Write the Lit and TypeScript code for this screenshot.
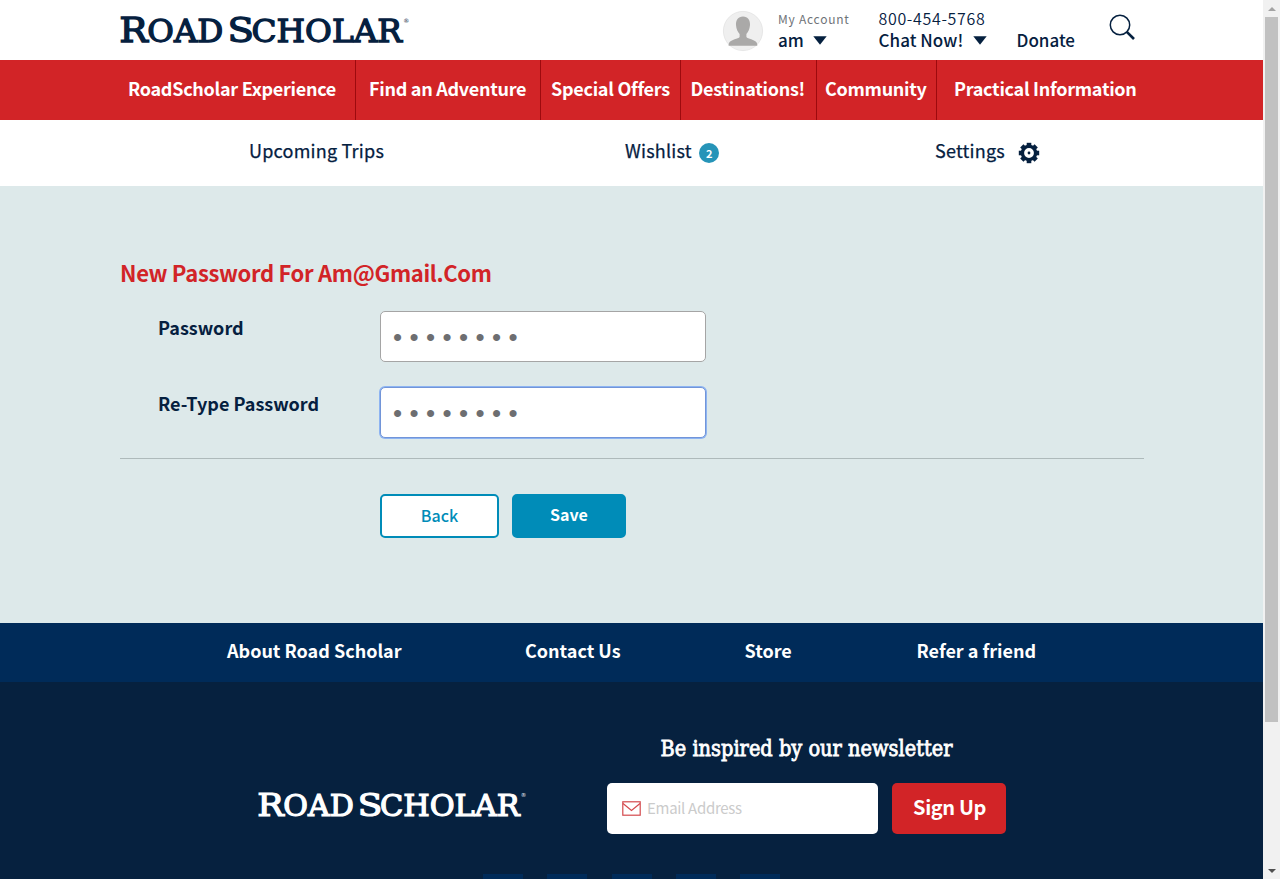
import { LitElement, html, svg, css } from 'lit';
import { customElement } from 'lit/decorators.js';

const logo = (w: number, h: number) => html`
  <svg class="logo" width=${w} height=${h} viewBox="0 -8 290 46">
    <g font-family="DejaVu Serif" font-weight="400" fill="currentColor" stroke="currentColor" stroke-width="1.3">
      <text x="-0.8" y="27.200" font-size="34" textLength="28.500" lengthAdjust="spacingAndGlyphs">R</text>
      <text x="27.3" y="27.200" font-size="31.500" textLength="76" lengthAdjust="spacingAndGlyphs">OAD</text>
      <text x="107.6" y="27.200" font-size="34" textLength="26.500" lengthAdjust="spacingAndGlyphs">S</text>
      <text x="131.5" y="27.200" font-size="31.500" textLength="150.500" lengthAdjust="spacingAndGlyphs">CHOLAR</text>
      <text x="283.3" y="7.500" font-size="6" stroke="none">®</text>
    </g>
  </svg>`;

const caret = svg`<svg class="caret" width="14" height="9" viewBox="0 0 14 9"><path d="M0.3 0.3H13.7L7 8.7Z" fill="#05203f"/></svg>`;

const teeth = [0, 45, 90, 135, 180, 225, 270, 315];

@customElement('app-root')
export class AppRoot extends LitElement {
  static styles = css`
    :host { display: block; width: 1280px; height: 879px; overflow: hidden; font-family: "Noto Sans CJK SC", "Open Sans", sans-serif; color: #05203f; }
    * { box-sizing: border-box; }
    svg { display: block; flex: none; overflow: visible; }
    .window { display: flex; height: 879px; }
    .page { width: 1263px; height: 879px; overflow: hidden; white-space: nowrap; }
    .header { height: 60px; padding-left: 120px; display: flex; align-items: flex-start; background: #fff; }
    .header .logo { margin-top: 7px; }
    .avatar { margin: 11px 15px 0 313px; }
    .col { display: flex; flex-direction: column; }
    .account { width: 100.5px; padding-top: 9px; }
    .phone { width: 138px; padding-top: 8px; }
    .small { font-size: 12px; line-height: 20px; letter-spacing: 0.75px; color: #6f7378; }
    .number { font-size: 16px; line-height: 21px; letter-spacing: 0.67px; font-weight: 350; }
    .menu { display: flex; align-items: center; gap: 9.5px; font-size: 17px; line-height: 22px; font-weight: 500; }
    .phone .menu { letter-spacing: 0.05px; }
    .donate { width: 92.5px; padding-top: 29px; font-size: 17px; line-height: 22px; font-weight: 500; }
    .search { margin-top: 14px; }
    .nav { height: 60px; padding-left: 120px; display: flex; background: #d22427; color: #fff; font-size: 18px; letter-spacing: -0.28px; font-weight: 700; line-height: 57px; }
    .tab { border-right: 1px solid #9d0a0e; }
    .tab:last-child { border-right: 0; }
    .t1 { width: 236px; padding-left: 8px; } .t2 { width: 185px; padding-left: 13px; }
    .t3 { width: 140px; padding-left: 10px; } .t4 { width: 136px; padding-left: 9.5px; }
    .t5 { width: 120px; padding-left: 8px; } .t6 { width: 207px; padding-left: 17px; }
    .subnav { height: 66px; padding-left: 249px; display: grid; grid-template-columns: 376px 310px 1fr; background: #fff; font-size: 18px; letter-spacing: 0.22px; line-height: 60px; -webkit-text-stroke: 0.25px #05203f; }
    .item { display: flex; align-items: flex-start; height: 64px; }
    .badge { width: 20px; height: 20px; margin: 23px 0 0 7.5px; border-radius: 50%; background: #2694b8; color: #fff; font-size: 11px; font-weight: 700; line-height: 20px; text-align: center; -webkit-text-stroke: 0; }
    .gear { margin: 22px 0 0 13.500px; }
    .main { height: 437px; padding: 70px 119px 0 120px; background: #dde9ea; }
    .title { height: 55px; font-size: 22px; line-height: 33px; letter-spacing: -0.33px; font-weight: 700; color: #d22427; }
    .field { display: grid; grid-template-columns: 222px 326px; height: 76px; padding-left: 38px; }
    .label { font-size: 18px; line-height: 32px; font-weight: 700; }
    .pass { width: 326px; height: 51px; padding: 2px 12px 0; border: 1px solid #a5a5a5; border-radius: 5px; background: #fff; font-family: "Liberation Sans", sans-serif; font-size: 26px; letter-spacing: 7.4px; color: #6d6e71; outline: none; }
    .focused { border-color: #7295d8; box-shadow: 0 0 0 1px #8db4f2; }
    .rule { height: 1px; margin-top: -5px; background: #aebabb; }
    .actions { display: flex; gap: 13px; padding: 35px 0 0 260px; }
    .btn { height: 44px; padding: 0; border: 2px solid #008cb8; border-radius: 5px; font-family: inherit; font-size: 16px; text-align: center; }
    .back { width: 119px; padding-bottom: 3px; background: #fff; color: #008cb8; font-weight: 500; }
    .save { width: 114px; padding-bottom: 5px; background: #008cb8; color: #fff; font-weight: 700; }
    .links { height: 59px; padding-left: 227px; display: grid; grid-template-columns: 298px 219.5px 172px 1fr; background: #002b59; color: #fff; font-size: 18px; line-height: 54px; font-weight: 700; }
    .footer { height: 197px; display: flex; flex-direction: column; justify-content: space-between; background: #06213f; color: #fff; }
    .signup { display: flex; align-items: flex-start; padding-left: 258px; }
    .signup .logo { margin: 101px 80px 0 0; }
    .letter { display: flex; flex-direction: column; align-items: center; padding-top: 50px; gap: 16px; }
    .form { display: flex; gap: 14px; }
    .email { width: 271px; height: 51px; padding-left: 15px; display: flex; align-items: center; gap: 6px; background: #fff; border-radius: 5px; color: #cbcbcb; font-size: 15px; letter-spacing: -0.3px; line-height: 49px; }
    .email span { height: 51px; }
    .go { width: 114px; height: 51px; padding-left: 1px; background: #d22427; border-radius: 5px; font-size: 20px; letter-spacing: -0.4px; font-weight: 700; line-height: 47px; text-align: center; }
    .social { display: flex; gap: 24.3px; padding-left: 483px; }
    .tile { width: 40px; height: 5px; background: #002b59; }
    .scroll { width: 17px; height: 879px; background: #f1f1f1; display: flex; flex-direction: column; align-items: center; justify-content: space-between; padding: 7px 0 6px; }
    .thumb { width: 13px; height: 705px; margin: 6px 0 auto; background: #c1c1c1; }
  `;

  render() {
    return html`
      <div class="window">
        <div class="page">
          <div class="header">
            ${logo(290, 46)}
            <svg class="avatar" width="40" height="40" viewBox="0 0 40 40">
              <circle cx="20" cy="20" r="19.6" fill="#efefef" stroke="#dcdcdc" stroke-width=".6"/>
              <path d="M20 5.500c-5 0-7.300 3.800-7 8.600.2 4 1.700 7 3.600 8.800v3.200c-1.200 1.800-8.600 2.700-10.300 5.400-.6 1.100-.7 2-.7 3.300h28.700c0-1.300-.1-2.200-.7-3.300-1.700-2.700-9-3.600-10.200-5.400v-3.200c1.900-1.800 3.300-4.800 3.600-8.800.3-4.800-2-8.600-7-8.600z" fill="#aaa9a8"/>
            </svg>
            <div class="col account"><div class="small">My Account</div><div class="menu">am ${caret}</div></div>
            <div class="col phone"><div class="number">800-454-5768</div><div class="menu">Chat Now! ${caret}</div></div>
            <div class="donate">Donate</div>
            <svg class="search" width="27" height="27" viewBox="0 0 27 27" fill="none" stroke="#05203f">
              <circle cx="11" cy="11" r="9.700" stroke-width="1.500"/><path d="M17.800 17.800L25 25" stroke-width="2.600"/>
            </svg>
          </div>
          <div class="nav">
            <div class="tab t1"><span>RoadScholar Experience</span></div>
            <div class="tab t2"><span>Find an Adventure</span></div>
            <div class="tab t3"><span>Special Offers</span></div>
            <div class="tab t4"><span>Destinations!</span></div>
            <div class="tab t5"><span>Community</span></div>
            <div class="tab t6"><span>Practical Information</span></div>
          </div>
          <div class="subnav">
            <div class="item">Upcoming Trips</div>
            <div class="item">Wishlist<span class="badge">2</span></div>
            <div class="item">Settings
              <svg class="gear" width="22" height="22" viewBox="-11 -11 22 22">
                <circle r="6.600" fill="none" stroke="#05203f" stroke-width="3.400"/>
                ${teeth.map(a => svg`<rect x="-2.300" y="-10.200" width="4.600" height="4" fill="#05203f" transform="rotate(${a})"/>`)}
                <circle r="1.400" fill="#05203f"/>
              </svg>
            </div>
          </div>
          <div class="main">
            <div class="title">New Password For Am@Gmail.Com</div>
            <div class="field"><label class="label">Password</label><input class="pass" type="password" value="password"></div>
            <div class="field"><label class="label">Re-Type Password</label><input class="pass focused" type="password" value="password"></div>
            <div class="rule"></div>
            <div class="actions"><button class="btn back">Back</button><button class="btn save">Save</button></div>
          </div>
          <div class="links"><span>About Road Scholar</span><span>Contact Us</span><span>Store</span><span>Refer a friend</span></div>
          <div class="footer">
            <div class="signup">
              ${logo(269, 42.7)}
              <div class="letter">
                <svg width="294" height="35" viewBox="0 0 294 35"><text x="0.500" y="24" font-family="DejaVu Serif" font-size="21.500" fill="#fff" stroke="#fff" stroke-width=".8" textLength="292" lengthAdjust="spacingAndGlyphs">Be inspired by our newsletter</text></svg>
                <div class="form">
                  <div class="email">
                    <svg width="19" height="15" viewBox="0 0 19 15" fill="none" stroke="#d4494d" stroke-width="1.200"><rect x=".8" y=".8" width="17.400" height="13.400"/><path d="M1 2.500L9.500 9.500L18 2.500"/></svg>
                    <span>Email Address</span>
                  </div>
                  <div class="go">Sign Up</div>
                </div>
              </div>
            </div>
            <div class="social">${[1, 2, 3, 4, 5].map(() => html`<div class="tile"></div>`)}</div>
          </div>
        </div>
        <div class="scroll">
          <svg width="8" height="4" viewBox="0 0 8 4"><path d="M4 0L8 4H0Z" fill="#a3a3a3"/></svg>
          <div class="thumb"></div>
          <svg width="8" height="4" viewBox="0 0 8 4"><path d="M0 0H8L4 4Z" fill="#505050"/></svg>
        </div>
      </div>`;
  }
}
